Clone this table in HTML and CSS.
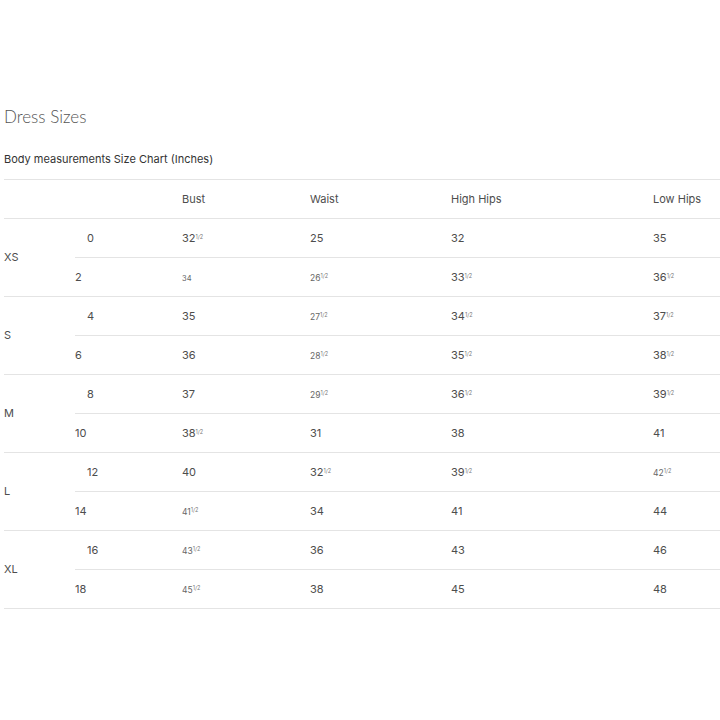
FILE: index.html
```html
<!DOCTYPE html>
<html>
<head>
<meta charset="utf-8">
<link rel="stylesheet" href="styles.css">
</head>
<body>
<div class="page">
  <h1 class="title">Dress Sizes</h1>
  <p class="subtitle">Body measurements Size Chart (Inches)</p>
  <table class="chart">
    <colgroup>
      <col class="c-size"><col class="c-num"><col class="c-bust"><col class="c-waist"><col class="c-high"><col class="c-low">
    </colgroup>
    <thead>
      <tr><th></th><th></th><th>Bust</th><th>Waist</th><th>High Hips</th><th>Low Hips</th></tr>
    </thead>
    <tbody>
      <tr class="first"><td rowspan="2" class="size">XS</td><td class="num ind">0</td><td>32<sup>1/2</sup></td><td>25</td><td>32</td><td>35</td></tr>
      <tr><td class="num">2</td><td><span class="tiny">34</span></td><td><span class="sm">26</span><sup>1/2</sup></td><td>33<sup>1/2</sup></td><td>36<sup>1/2</sup></td></tr>
      <tr class="first"><td rowspan="2" class="size">S</td><td class="num ind">4</td><td>35</td><td><span class="sm">27</span><sup>1/2</sup></td><td>34<sup>1/2</sup></td><td>37<sup>1/2</sup></td></tr>
      <tr><td class="num">6</td><td>36</td><td><span class="sm">28</span><sup>1/2</sup></td><td>35<sup>1/2</sup></td><td>38<sup>1/2</sup></td></tr>
      <tr class="first"><td rowspan="2" class="size">M</td><td class="num ind">8</td><td>37</td><td><span class="sm">29</span><sup>1/2</sup></td><td>36<sup>1/2</sup></td><td>39<sup>1/2</sup></td></tr>
      <tr><td class="num">10</td><td>38<sup>1/2</sup></td><td>31</td><td>38</td><td>41</td></tr>
      <tr class="first"><td rowspan="2" class="size">L</td><td class="num ind">12</td><td>40</td><td>32<sup>1/2</sup></td><td>39<sup>1/2</sup></td><td><span class="sm">42</span><sup>1/2</sup></td></tr>
      <tr><td class="num">14</td><td><span class="sm">41</span><sup>1/2</sup></td><td>34</td><td>41</td><td>44</td></tr>
      <tr class="first"><td rowspan="2" class="size">XL</td><td class="num ind">16</td><td><span class="sm">43</span><sup>1/2</sup></td><td>36</td><td>43</td><td>46</td></tr>
      <tr><td class="num">18</td><td><span class="sm">45</span><sup>1/2</sup></td><td>38</td><td>45</td><td>48</td></tr>
    </tbody>
  </table>
</div>
</body>
</html>
```

FILE: styles.css
```css
html, body {
  margin: 0;
  padding: 0;
  background: #ffffff;
}
.page {
  padding: 107px 0 0 4px;
  font-family: "Inter", "Roboto", "Liberation Sans", sans-serif;
  color: #4a4a4a;
}
.title {
  margin: 0;
  font-family: "Lato", "Open Sans", sans-serif;
  font-weight: 300;
  font-size: 17px;
  line-height: 20px;
  color: #555;
}
.subtitle {
  margin: 25px 0 0 0;
  font-size: 11px;
  line-height: 14px;
  color: #333;
}
.chart {
  margin-top: 13px;
  width: 716px;
  table-layout: fixed;
  border-collapse: collapse;
  font-size: 11px;
  color: #4d4d4d;
}
.c-size { width: 71px; }
.c-num { width: 107px; }
.c-bust { width: 128px; }
.c-waist { width: 141px; }
.c-high { width: 202px; }
.c-low { width: 67px; }
.chart th, .chart td {
  height: 37px;
  padding: 0 0 1px 0;
  text-align: left;
  font-weight: 400;
  border-top: 1px solid #e4e4e4;
  border-bottom: 1px solid #e4e4e4;
  vertical-align: middle;
  white-space: nowrap;
}
.chart th {
  color: #4d4d4d;
}
.chart .ind {
  padding-left: 12px;
}
sup {
  font-size: 5.5px;
  color: #777;
  vertical-align: 3px;
  line-height: 0;
}
.sm {
  font-size: 8.5px;
  color: #666;
}
.tiny {
  font-size: 7.5px;
  color: #666;
}
```
